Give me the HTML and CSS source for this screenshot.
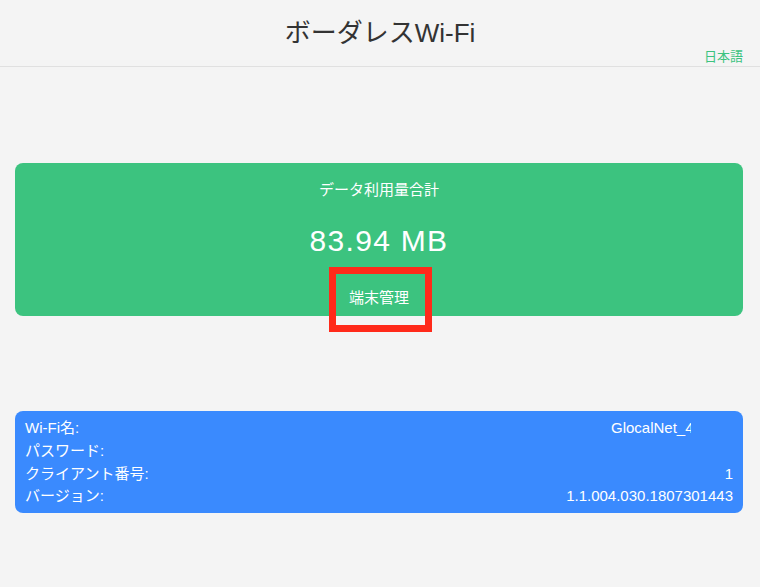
FILE: index.html
```html
<!DOCTYPE html>
<html lang="ja">
<head>
<meta charset="utf-8">
<link rel="stylesheet" href="styles.css">
</head>
<body>
<header class="header">
  <h1 class="title">ボーダレスWi‑Fi</h1>
  <div class="lang">日本語</div>
</header>
<main class="main">
  <section class="usage">
    <div class="usage-label">データ利用量合計</div>
    <div class="usage-value">83.94 MB</div>
    <div class="usage-link">端末管理</div>
    <div class="highlight"></div>
  </section>
  <section class="info">
    <div class="row"><span>Wi‑Fi名:</span><span class="clip">GlocalNet_4A2B</span></div>
    <div class="row"><span>パスワード:</span><span></span></div>
    <div class="row"><span>クライアント番号:</span><span>1</span></div>
    <div class="row"><span>バージョン:</span><span>1.1.004.030.1807301443</span></div>
  </section>
</main>
</body>
</html>
```
FILE: styles.css
```css
* { box-sizing: border-box; }
html, body { margin: 0; padding: 0; }
body {
  background: #f4f4f4;
  font-family: "Liberation Sans", "Noto Sans CJK JP", sans-serif;
  color: #333;
  width: 760px;
  height: 587px;
  overflow: hidden;
}
.header {
  height: 67px;
  border-bottom: 1px solid #e0e0e0;
  position: relative;
}
.title {
  margin: 0;
  padding-top: 15px;
  text-align: center;
  font-weight: normal;
  font-size: 26px;
  line-height: 36px;
  color: #333;
}
.lang {
  position: absolute;
  right: 17px;
  top: 48px;
  font-size: 13px;
  line-height: 18px;
  color: #3cc37f;
}
.main {
  padding: 96px 17px 0 15px;
}
.usage {
  position: relative;
  background: #3cc37f;
  border-radius: 8px;
  height: 153px;
  color: #fff;
  text-align: center;
  padding-top: 16px;
}
.usage-label {
  font-size: 15px;
  line-height: 22px;
}
.usage-value {
  font-size: 30px;
  letter-spacing: 1.3px;
  line-height: 36px;
  margin-top: 22px;
}
.usage-link {
  margin-top: 28px;
  font-size: 15px;
  line-height: 22px;
}
.highlight {
  position: absolute;
  left: 314px;
  top: 104px;
  width: 103px;
  height: 65px;
  border: 7px solid #ff2a1a;
}
.info {
  margin-top: 95px;
  background: #3a8afe;
  border-radius: 8px;
  color: #fff;
  padding: 6px 10px 5px 10px;
  font-size: 15px;
  line-height: 22.8px;
}
.row {
  display: flex;
  justify-content: space-between;
  height: 22.8px;
}
.clip {
  width: 80px;
  overflow: hidden;
  white-space: nowrap;
  margin-right: 42px;
}
```
